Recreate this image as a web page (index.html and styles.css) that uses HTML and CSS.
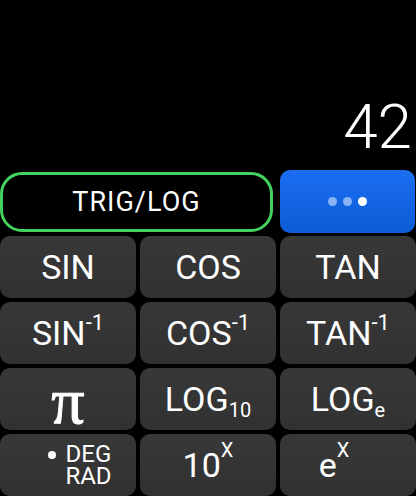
FILE: index.html
```html
<!DOCTYPE html>
<html lang="en">
  <head>
    <meta charset="UTF-8" />
    <meta name="viewport" content="width=device-width, initial-scale=1.0" />
    <title>Calculator</title>
    <link rel="stylesheet" href="styles.css">
  </head>
  <body>
    <div class="screen">
      <div class="display"><span class="value">42</span></div>
      <div class="mode-row">
        <button class="mode">TRIG/LOG</button>
        <button class="more">
          <span class="dot"></span><span class="dot"></span><span class="dot on"></span>
        </button>
      </div>
      <div class="keys">
        <button class="key">SIN</button>
        <button class="key">COS</button>
        <button class="key">TAN</button>
        <button class="key">SIN<sup>-1</sup></button>
        <button class="key">COS<sup>-1</sup></button>
        <button class="key">TAN<sup>-1</sup></button>
        <button class="key pi">π</button>
        <button class="key">LOG<sub>10</sub></button>
        <button class="key">LOG<sub>e</sub></button>
        <button class="key angle">
          <span class="bullet"></span>
          <span class="units"><span>DEG</span><span>RAD</span></span>
        </button>
        <button class="key pow">10<sup>X</sup></button>
        <button class="key pow exp">e<sup>X</sup></button>
      </div>
    </div>
  </body>
</html>
```

FILE: styles.css
```css
body {
  margin: 0;
  background: #000;
  color: #fff;
  font-family: Roboto, "Liberation Sans", sans-serif;
}
.screen {
  width: 416px;
  height: 496px;
  overflow: hidden;
}
.display {
  height: 170px;
  box-sizing: border-box;
  display: flex;
  justify-content: flex-end;
  align-items: flex-end;
  padding: 0 4px 12px 0;
}
.value {
  font-size: 62px;
  font-weight: 300;
  line-height: 62px;
}
button {
  font-family: inherit;
  color: #fff;
  border: none;
  padding: 0;
  margin: 0;
  cursor: pointer;
}
.mode-row {
  display: grid;
  grid-template-columns: 1fr 1fr 1fr;
  gap: 4px;
  height: 63px;
  margin-bottom: 3px;
}
.mode {
  grid-column: span 2;
  margin: 2px 3px 1px 0;
  background: #000;
  border: 3px solid #43d15f;
  border-radius: 22px;
  font-size: 27px;
  letter-spacing: 1px;
}
.more {
  margin-right: 1px;
  background: linear-gradient(#1c6ef2, #0b5cd5);
  border-radius: 10px;
  display: flex;
  justify-content: center;
  align-items: center;
  gap: 6px;
}
.dot {
  width: 9px;
  height: 9px;
  border-radius: 50%;
  background: rgba(255, 255, 255, 0.5);
}
.dot.on {
  background: #fff;
}
.keys {
  display: grid;
  grid-template-columns: 1fr 1fr 1fr;
  grid-auto-rows: 62px;
  gap: 4px;
}
.key {
  background: linear-gradient(#383838, #313131);
  border-radius: 10px;
  font-size: 34px;
  line-height: 1;
}
.key sup {
  font-size: 22px;
  line-height: 0;
  vertical-align: 15px;
}
.key sub {
  font-size: 20px;
  line-height: 0;
  vertical-align: -6px;
}
.pow sup {
  font-size: 20px;
  vertical-align: 20px;
}
.exp {
  padding-right: 28px;
}
.pi {
  font-family: "Liberation Serif", serif;
  font-size: 66px;
  padding-bottom: 12px;
  -webkit-text-stroke: 1px #fff;
}
.angle {
  display: flex;
  justify-content: center;
  align-items: center;
  gap: 9px;
  padding-left: 24px;
}
.bullet {
  width: 8px;
  height: 8px;
  border-radius: 50%;
  background: #fff;
  margin-bottom: 20px;
}
.units {
  display: flex;
  flex-direction: column;
  font-size: 24px;
  line-height: 22px;
}
```
